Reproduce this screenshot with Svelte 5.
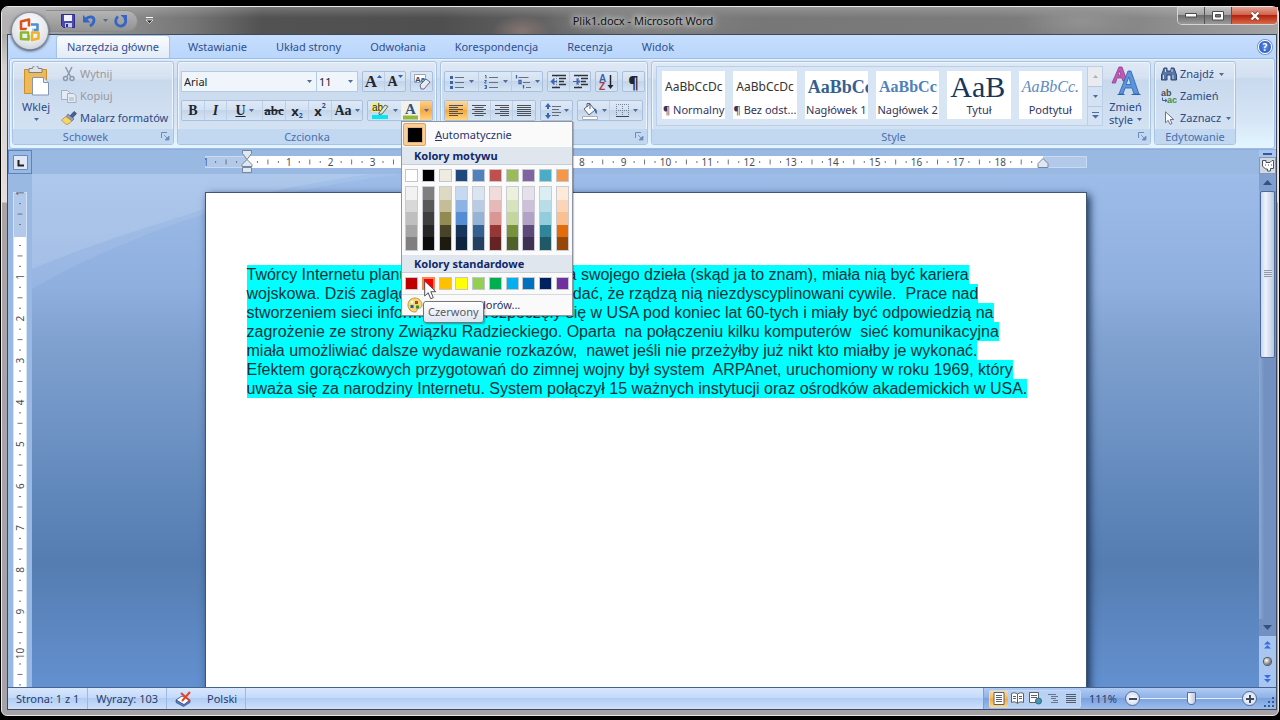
<script>
  const tabs = ['Narzędzia główne', 'Wstawianie', 'Układ strony', 'Odwołania', 'Korespondencja', 'Recenzja', 'Widok'];

  const styles = [
    { sample: 'AaBbCcDc', name: '¶ Normalny', kind: 'plain' },
    { sample: 'AaBbCcDc', name: '¶ Bez odst...', kind: 'plain' },
    { sample: 'AaBbCc', name: 'Nagłówek 1', kind: 'h1' },
    { sample: 'AaBbCc', name: 'Nagłówek 2', kind: 'h2' },
    { sample: 'AaB', name: 'Tytuł', kind: 'title' },
    { sample: 'AaBbCc.', name: 'Podtytuł', kind: 'subtitle' }
  ];

  const theme = [
    ['#ffffff', '#f2f2f2', '#d8d8d8', '#bfbfbf', '#a5a5a5', '#7f7f7f'],
    ['#000000', '#7f7f7f', '#595959', '#3f3f3f', '#262626', '#0c0c0c'],
    ['#eeece1', '#ddd9c3', '#c4bd97', '#938953', '#494429', '#1d1b10'],
    ['#1f497d', '#c6d9f0', '#8db3e2', '#548dd4', '#17365d', '#0f243e'],
    ['#4f81bd', '#dbe5f1', '#b8cce4', '#95b3d7', '#366092', '#244061'],
    ['#c0504d', '#f2dcdb', '#e5b9b7', '#d99694', '#953734', '#632423'],
    ['#9bbb59', '#ebf1dd', '#d7e3bc', '#c3d69b', '#76923c', '#4f6128'],
    ['#8064a2', '#e5e0ec', '#ccc1d9', '#b2a2c7', '#5f497a', '#3f3151'],
    ['#4bacc6', '#dbeef3', '#b7dde8', '#92cddc', '#31859b', '#205867'],
    ['#f79646', '#fdeada', '#fbd5b5', '#fac08f', '#e36c09', '#974806']
  ];
  const standard = ['#c00000', '#ff0000', '#ffc000', '#ffff00', '#92d050', '#00b050', '#00b0f0', '#0070c0', '#002060', '#7030a0'];
  let picked = $state('#ff0000');

  const lines = [
    'Twórcy Internetu planując zasady użytkowania swojego dzieła (skąd ja to znam), miała nią być kariera',
    'wojskowa. Dziś zaglądając do sieci zawsze widać, że rządzą nią niezdyscyplinowani cywile.  Prace nad',
    'stworzeniem sieci informatycznej rozpoczęły się w USA pod koniec lat 60-tych i miały być odpowiedzią na',
    'zagrożenie ze strony Związku Radzieckiego. Oparta  na połączeniu kilku komputerów  sieć komunikacyjna',
    'miała umożliwiać dalsze wydawanie rozkazów,  nawet jeśli nie przeżyłby już nikt kto miałby je wykonać.',
    'Efektem gorączkowych przygotowań do zimnej wojny był system  ARPAnet, uruchomiony w roku 1969, który',
    'uważa się za narodziny Internetu. System połączył 15 ważnych instytucji oraz ośrodków akademickich w USA.'
  ];

  const cm = 41.85;
  const hNumbers = Array.from({ length: 20 }, (_, i) => i - 1);
  const vNumbers = Array.from({ length: 12 }, (_, i) => i - 1);
</script>

{#snippet arrow()}
  <svg class="arrow" width="5" height="3" viewBox="0 0 5 3"><path d="M0 0h5L2.5 3z" fill="#4d6c99" /></svg>
{/snippet}

{#snippet launcher(label)}
  <button class="launcher" aria-label={label}>
    <svg width="9" height="9" viewBox="0 0 9 9"><path d="M.5 6V.5H6" fill="none" stroke="#6c8cb8" /><path d="M3 3l3.5 3.5M8 4v4H4z" fill="#6c8cb8" stroke="#6c8cb8" stroke-width=".8" /></svg>
  </button>
{/snippet}

{#snippet textLines(kind)}
  <svg width="16" height="14" viewBox="0 0 16 14">
    {#each [1.5, 3.5, 5.5, 7.5, 9.5, 11.5] as y, i}
      {@const w = i % 2 && kind !== 'full' ? 9 : 14}
      <path d="M{kind === 'left' || kind === 'full' ? 1 : kind === 'right' ? 15 - w : 8 - w / 2} {y}h{w}" stroke="#4b5058" />
    {/each}
  </svg>
{/snippet}

{#snippet listIcon(kind)}
  <svg width="17" height="16" viewBox="0 0 17 16">
    {#if kind === 'bullets'}
      <path d="M1 2h3v3H1zM1 7h3v3H1zM1 12h3v3H1z" fill="#3c62a8" />
      <path d="M6 3.5h9M6 8.5h9M6 13.5h9" stroke="#68727f" />
    {:else if kind === 'numbers'}
      <path d="M2 1.5h1v3M1.5 6.5h2L1.5 9h2M1.5 11.5h2v3h-2M2 13h1.5" fill="none" stroke="#3c62a8" />
      <path d="M6 3.5h9M6 8.5h9M6 13.5h9" stroke="#68727f" />
    {:else}
      <path d="M1.5 1v3.5M4 6.5h2v3H4zM8.5 11v3.5" fill="none" stroke="#3c62a8" stroke-width="1.3" />
      <path d="M3.5 3.5h10M8 8.5h7M11 13.5h5" stroke="#68727f" />
    {/if}
  </svg>
{/snippet}

{#snippet indentIcon(out)}
  <svg width="17" height="16" viewBox="0 0 17 16">
    <path d="M2 1.5h14M9 4.5h7M9 7.5h5M9 10.5h7M2 13.5h8" stroke="#30343a" stroke-width="1.5" />
    <path d={out ? 'M7 7.5H3M1 7.5l3-3v6z' : 'M1 7.5h4M8 7.5l-3-3v6z'} fill="#3865b8" stroke="#3865b8" />
    <path d="M6.5 2v12" stroke="#7f8a99" stroke-dasharray="1 1" />
  </svg>
{/snippet}

<div class="screen">
  <div class="window">
    <header class="titlebar">
      <div class="qat">
        <button aria-label="Zapisz">
          <svg width="16" height="16" viewBox="0 0 16 16"><path d="M1.5 1.5h13v13h-11l-2-2z" fill="#4a49b4" stroke="#2d2f86" /><path d="M4 2h8v6H4z" fill="#eef3ff" /><path d="M5 10h7v4.5H5z" fill="#c6cbe6" /><path d="M6 11h2v3H6z" fill="#30317e" /></svg>
        </button>
        <button class="undo" aria-label="Cofnij">
          <svg width="15" height="14" viewBox="0 0 15 14"><path d="M4 5c3-3.500 8-2.500 8 1 0 2.500-1.500 4.500-4 6" fill="none" stroke="#3566c4" stroke-width="2.800" /><path d="M1 1v7.500h7.500z" fill="#3566c4" /></svg>
          {@render arrow()}
        </button>
        <button aria-label="Powtórz">
          <svg width="14" height="14" viewBox="0 0 14 14"><path d="M4 2.5C1 5 1 9 3.5 11s7 1 8-2.500c.5-2 0-3.500-1-4.500" fill="none" stroke="#3566c4" stroke-width="2.800" /><path d="M6.500 1H13v6.500z" fill="#3566c4" /></svg>
        </button>
      </div>
      <button class="qatmore" aria-label="Dostosuj pasek narzędzi Szybki dostęp">
        <svg width="7" height="7" viewBox="0 0 7 7"><path d="M0 .5h7" stroke="#fff" /><path d="M0 3h7L3.5 6.5z" fill="#26303d" stroke="#fff" stroke-width=".7" /></svg>
      </button>
      <h1>Plik1.docx - Microsoft Word</h1>
      <div class="winbtns">
        <button aria-label="Minimalizuj"><svg width="12" height="5" viewBox="0 0 12 5"><path d="M.5.5h11v3.5H.5z" fill="#fff" stroke="#4c4c4c" /></svg></button>
        <button aria-label="Maksymalizuj"><svg width="12" height="10" viewBox="0 0 12 10"><path d="M.5.5h11v8.5H.5z" fill="#fff" stroke="#4c4c4c" /><path d="M3.5 3.5h5v2.5h-5z" fill="#777" stroke="#4c4c4c" /></svg></button>
        <button class="close" aria-label="Zamknij"><svg width="12" height="10" viewBox="0 0 12 10"><path d="M2.5 1.5l7 7M9.5 1.5l-7 7" stroke="#6a3434" stroke-width="3.600" /><path d="M2.5 1.5l7 7M9.5 1.5l-7 7" stroke="#fff" stroke-width="2.400" /></svg></button>
      </div>
    </header>

    <button class="office" aria-label="Przycisk pakietu Office">
      <svg width="24" height="26" viewBox="0 0 24 26" fill="none" stroke-width="2.600" stroke-linejoin="round">
        <path d="M9 11H3V3.5l8-2v7" stroke="#d9531e" />
        <path d="M13 6.5h6.5V12H14" stroke="#4a90d4" />
        <path d="M3 14.5h7.5v7L3 21z" stroke="#8bb92c" />
        <path d="M14 14.5h6.5v6L14 22z" stroke="#eeb326" />
        <path d="M8 12h8M12 9v8" stroke="#fff" stroke-width="1" />
      </svg>
    </button>

    <div class="client">
      <nav class="tabs">
        {#each tabs as tab, i}
          <button class="tab" class:active={i === 0}>{tab}</button>
        {/each}
        <button class="help" aria-label="Pomoc">?</button>
      </nav>

      <div class="ribbon">
        <section class="group clipboard">
          <div class="body">
            <button class="big">
              <svg width="27" height="30" viewBox="0 0 27 30">
                <path d="M1.5 3.5h22v24h-22z" fill="#efb955" stroke="#c98e2f" />
                <path d="M6 2.5h3.5a3 3 0 0 1 6 0H19v4H6z" fill="#dfe2e6" stroke="#7b828c" />
                <path d="M9.5 11.5h11l5 5v12.5h-16z" fill="#fff" stroke="#8494b4" /><path d="M20.5 11.5v5h5" fill="#dbe5f5" stroke="#8494b4" />
              </svg>
              <span>Wklej</span>
              {@render arrow()}
            </button>
            <div class="stack">
              <button class="row" disabled>
                <svg width="16" height="16" viewBox="0 0 16 16" fill="none" stroke="#8d99ab" stroke-width="1.500"><path d="M4.5 1l5 9.5M11 1L6 10.5" /><circle cx="4.5" cy="12.5" r="2" /><circle cx="11" cy="12.5" r="2" /></svg>
                Wytnij
              </button>
              <button class="row" disabled>
                <svg width="16" height="14" viewBox="0 0 16 14" fill="#e4ebf5" stroke="#a3b0c4"><path d="M.5 1.5h6l2 2v7h-8z" /><path d="M6.5 4.5h6l2.5 2v7H6.5z" /><path d="M8 9h5M8 11h5" /></svg>
                Kopiuj
              </button>
              <button class="row">
                <svg width="16" height="14" viewBox="0 0 16 14"><path d="M9 5l4-4.5 2.5 2L11.5 7z" fill="#4a5f93" stroke="#2c3c66" stroke-width=".7" /><path d="M7 3l6 5-2 2-6-4z" fill="#93a1bd" stroke="#47557a" stroke-width=".6" /><path d="M5 5.5l6 4.5c-2 2-4 3.500-6 3.500L.5 9z" fill="#f4d56f" stroke="#a98222" stroke-width=".7" /></svg>
                Malarz formatów
              </button>
            </div>
          </div>
          <footer><span>Schowek</span>{@render launcher('Schowek')}</footer>
        </section>

        <section class="group font">
          <div class="body rows">
            <div class="line">
              <div class="combos">
                <label class="combo family"><select aria-label="Czcionka"><option>Arial</option></select>{@render arrow()}</label>
                <label class="combo size"><select aria-label="Rozmiar czcionki"><option>11</option></select>{@render arrow()}</label>
              </div>
              <div class="cluster">
                <button class="w21 serif" aria-label="Powiększ czcionkę"><b class="grow">A</b><svg class="caret" width="5" height="3" viewBox="0 0 5 3"><path d="M0 3h5L2.5 0z" fill="#365fa8" /></svg></button>
                <button class="w21 serif" aria-label="Zmniejsz czcionkę"><b class="shrink">A</b><svg class="caret" width="5" height="3" viewBox="0 0 5 3"><path d="M0 0h5L2.5 3z" fill="#365fa8" /></svg></button>
              </div>
              <div class="cluster">
                <button class="w21" aria-label="Wyczyść formatowanie">
                  <svg width="18" height="18" viewBox="0 0 18 18"><path d="M1.5 1.5h11v8h-11z" fill="#fff" stroke="#9aa5ba" /><text x="2" y="8.500" font-size="8" font-weight="bold" fill="#364563">Aa</text><path d="M7 12l6-6 4 3-6 7H8z" fill="#e9eaf2" stroke="#626c88" /></svg>
                </button>
              </div>
            </div>
            <div class="line">
              <div class="cluster">
                <button class="w22 serif"><b>B</b></button>
                <button class="w22 serif"><i>I</i></button>
                <button class="w36 serif"><b><u>U</u></b>{@render arrow()}</button>
                <button class="w23 serif small"><b><s>abc</s></b></button>
                <button class="w23 sub"><b>x</b><sub>2</sub></button>
                <button class="w23 sup"><b>x</b><sup>2</sup></button>
                <button class="w31 serif"><b class="case">Aa</b>{@render arrow()}</button>
              </div>
              <div class="cluster">
                <button class="w33" aria-label="Kolor wyróżnienia tekstu">
                  <svg width="19" height="18" viewBox="0 0 19 18"><path d="M1 13h16v4H1z" fill="#00e8f4" /><path d="M1 1h9v9H1z" fill="#f4ee72" /><text x="1" y="9" font-size="10" fill="#222b38">ab</text><path d="M8 11l6-8 3 1.5-6 7.5-3 .5z" fill="#dfe8d2" stroke="#5b6c55" /></svg>
                  {@render arrow()}
                </button>
                <div class="colorsplit">
                  <button class="face" aria-label="Kolor czcionki">
                    <svg width="17" height="18" viewBox="0 0 17 18"><path d="M1 13.5h15v4H1z" fill="#92b83c" /><text class="letter" x="3" y="12" font-size="15" font-weight="bold">A</text></svg>
                  </button>
                  <button class="drop" aria-label="Kolor czcionki, menu">{@render arrow()}</button>

                  <div class="menu">
                    <button class="auto"><span class="autobox"><span></span></span><span><u>A</u>utomatycznie</span></button>
                    <h2>Kolory motywu</h2>
                    <div class="grid top">
                      {#each theme as column}
                        <button class="sw" aria-label={column[0]} style="background: {column[0]}" onclick={() => (picked = column[0])}></button>
                      {/each}
                    </div>
                    <div class="grid tints">
                      {#each theme as column}
                        <div class="column">
                          {#each column.slice(1) as tint}
                            <button aria-label={tint} style="background: {tint}" onclick={() => (picked = tint)}></button>
                          {/each}
                        </div>
                      {/each}
                    </div>
                    <h2>Kolory standardowe</h2>
                    <div class="grid std">
                      {#each standard as color}
                        <button class="sw" class:hot={color === picked} aria-label={color} style="background: {color}" onclick={() => (picked = color)}></button>
                      {/each}
                    </div>
                    <button class="more">
                      <svg width="16" height="16" viewBox="0 0 16 16"><path d="M8 1C4 1 1 4 1 8s3 7 7 7c2 0 1.5-2 2.5-3s4.5-.5 4.5-4-3-7-7-7z" fill="#f3d877" stroke="#c09a3c" /><circle cx="5" cy="5" r="1.500" fill="#fff" /><path d="M8 4h3v3H8z" fill="#b43d28" /><path d="M3.5 8h3v3h-3z" fill="#2d56a5" /><path d="M9 8.5h3v3H9z" fill="#3f8d35" /></svg>
                      <span>Więcej kolorów...</span>
                    </button>
                    <div class="tooltip">Czerwony</div>
                    <svg class="cursor" width="13" height="20" viewBox="0 0 13 20"><path d="M.7 1v15l3.5-3.300 2.500 6 2.600-1-2.500-6h5z" fill="#fff" stroke="#4f4f57" /></svg>
                  </div>
                </div>
              </div>
            </div>
          </div>
          <footer><span>Czcionka</span></footer>
        </section>

        <section class="group para">
          <div class="body rows">
            <div class="line">
              <div class="cluster">
                <button class="w33" aria-label="Punktory">{@render listIcon('bullets')}{@render arrow()}</button>
                <button class="w33" aria-label="Numerowanie">{@render listIcon('numbers')}{@render arrow()}</button>
                <button class="w31" aria-label="Lista wielopoziomowa">{@render listIcon('multi')}{@render arrow()}</button>
              </div>
              <div class="cluster">
                <button class="w21" aria-label="Zmniejsz wcięcie">{@render indentIcon(true)}</button>
                <button class="w21" aria-label="Zwiększ wcięcie">{@render indentIcon(false)}</button>
              </div>
              <div class="cluster">
                <button class="w21" aria-label="Sortuj">
                  <svg width="17" height="18" viewBox="0 0 17 18"><text x="1" y="8.500" font-size="10" font-weight="bold" fill="#3b62ac">A</text><text x="1" y="17" font-size="10" font-weight="bold" fill="#a93a44">Z</text><path d="M12.5 2v11" stroke="#22262c" stroke-width="1.500" /><path d="M9.5 12h6l-3 4z" fill="#22262c" /></svg>
                </button>
              </div>
              <div class="cluster"><button class="w21 pilcrow">¶</button></div>
            </div>
            <div class="line">
              <div class="cluster">
                <button class="w22 on" aria-label="Wyrównaj do lewej">{@render textLines('left')}</button>
                <button class="w23" aria-label="Wyśrodkuj">{@render textLines('center')}</button>
                <button class="w22" aria-label="Wyrównaj do prawej">{@render textLines('right')}</button>
                <button class="w23" aria-label="Wyjustuj">{@render textLines('full')}</button>
              </div>
              <div class="cluster">
                <button class="w31" aria-label="Interlinia">
                  <svg width="16" height="16" viewBox="0 0 16 16"><path d="M3 0l3 4H0zM3 16l3-4H0z" fill="#3865b8" /><path d="M3 3v3M3 10v3" stroke="#3865b8" stroke-width="2" /><path d="M7 3.5h9M7 6.5h7M7 9.5h9M7 12.5h7" stroke="#626b77" /></svg>
                  {@render arrow()}
                </button>
              </div>
              <div class="cluster">
                <button class="w31" aria-label="Cieniowanie">
                  <svg width="18" height="18" viewBox="0 0 18 18"><path d="M3 7l6-5 5 6-6 5z" fill="#f7f9fc" stroke="#5a6477" /><path d="M6 5V1.5h3V7" fill="none" stroke="#5a6477" /><path d="M13 6c3 1 3.500 4 2.500 6-2-1-1-3-2.500-6z" fill="#3563b7" /><path d="M1.5 14.5h15v3h-15z" fill="#fff" stroke="#a5b0bf" /></svg>
                  {@render arrow()}
                </button>
                <button class="w33" aria-label="Obramowania">
                  <svg width="15" height="15" viewBox="0 0 15 15" fill="none"><path d="M1.5 14V1.5h12V14M7.5 1v12M1 7.5h13" stroke="#748096" stroke-dasharray="1 1" /><path d="M1 13.5h13" stroke="#3c4554" /></svg>
                  {@render arrow()}
                </button>
              </div>
            </div>
          </div>
          <footer><span></span>{@render launcher('Akapit')}</footer>
        </section>

        <section class="group styles">
          <div class="body">
            <div class="gallery">
              <div class="items">
                {#each styles as style}
                  <button class="style"><span class="sample {style.kind}">{style.sample}</span><span class="name">{style.name}</span></button>
                {/each}
              </div>
              <div class="gscroll">
                <button class="off" aria-label="W górę"><svg width="5" height="3" viewBox="0 0 5 3"><path d="M0 3h5L2.5 0z" fill="#a9b2be" /></svg></button>
                <button aria-label="W dół">{@render arrow()}</button>
                <button aria-label="Więcej"><svg width="7" height="7" viewBox="0 0 7 7"><path d="M0 .5h7" stroke="#4d6c99" /><path d="M0 3h7L3.5 6.5z" fill="#4d6c99" /></svg></button>
              </div>
            </div>
            <button class="big change">
              <svg width="30" height="30" viewBox="0 0 30 30"><path d="M1 17L8 1h3l5 14h-4l-1-3H6l-1.500 5zM7 9h3L8.700 5z" fill="#c05ab5" stroke="#8f3a8b" stroke-width=".8" /><path d="M8 28L17 5h3l8 23h-5l-2-6h-7l-2 6zM15 18.5h5L17.800 11z" fill="#5b94dc" stroke="#2f62ad" stroke-width=".8" /><path d="M6.5 28.5h7M20.5 28.5h9" stroke="#2f62ad" /></svg>
              <span>Zmień</span>
              <span>style {@render arrow()}</span>
            </button>
          </div>
          <footer><span>Style</span>{@render launcher('Style')}</footer>
        </section>

        <section class="group edit">
          <div class="body">
            <div class="stack">
              <button class="row">
                <svg width="16" height="14" viewBox="0 0 16 14"><path d="M3 1h3v3h4V1h3l2.5 7v5H10V8H6v5H.5V8z" fill="#5876a8" stroke="#2f4570" /><path d="M2.5 8v4M12 8v4M4.5 2v3M11 2v3" stroke="#cddaf0" /></svg>
                Znajdź {@render arrow()}
              </button>
              <button class="row">
                <svg width="16" height="16" viewBox="0 0 16 16"><text x="0" y="8" font-size="9" font-weight="bold" fill="#4a4e56">ab</text><text x="6" y="15" font-size="9" font-weight="bold" fill="#3c9141">ac</text><path d="M1.5 9.5v3h4M4 11l2 1.5L4 14" fill="none" stroke="#3a5fae" /></svg>
                Zamień
              </button>
              <button class="row">
                <svg width="16" height="14" viewBox="0 0 16 14"><path d="M4.5.8v11l2.700-2.500 1.800 4 2-.8-1.800-4h3.500z" fill="#fff" stroke="#6a7690" /></svg>
                Zaznacz {@render arrow()}
              </button>
            </div>
          </div>
          <footer><span>Edytowanie</span></footer>
        </section>
      </div>

      <div class="workspace">
        <button class="tabstop" aria-label="Tabulator">
          <svg width="15" height="15" viewBox="0 0 15 15"><path d="M.5.5h14v14H.5z" fill="#dfe8f6" stroke="#6f87b2" /><path d="M5.500 5v5.500H11" fill="none" stroke="#222" stroke-width="2" /></svg>
        </button>
        <div class="hruler">
          <svg width="882" height="24" viewBox="0 0 882 24">
            <path d="M.5 6.5h881v11H.5z" fill="#b3c9ea" stroke="#c9dbf4" />
            <path d="M42 6h796v12H42z" fill="#fff" />
            {#each hNumbers as n}
              {@const x = 42 + n * cm}
              {#if n !== 0 && n < 19}<text x={n < 0 ? -2 : x} y="16" class:first={n < 0}>{Math.abs(n)}</text>{/if}
              {#if n < 20 && x + cm * 0.75 < 882}
                <path d="M{x + cm * 0.25} 11v2M{x + cm * 0.5} 9.5v5M{x + cm * 0.75} 11v2" stroke="#6d7380" />
              {/if}
            {/each}
            <path d="M37.5.5h9v3L42 9.5l5 5v2h-10v-2l5-5-4.500-6zM37.5 17.5h9v5h-9z" fill="#dfe7f1" stroke="#76869f" />
            <path d="M838 8.5l5 5v4h-10v-4z" fill="#dfe7f1" stroke="#76869f" />
          </svg>
        </div>
        <div class="vruler">
          <svg width="14" height="497" viewBox="0 0 14 497">
            <path d="M.5.5h13v497H.5z" fill="#b3c9ea" stroke="#d5e3f7" />
            <path d="M1 45h12v460H1z" fill="#fff" />
            {#each vNumbers as n}
              {@const y = 43 + n * cm}
              {#if n !== 0}<text transform="translate(11 {y}) rotate(-90)">{Math.abs(n)}</text>{/if}
              <path d="M6 {y + cm * 0.25}h2M4.5 {y + cm * 0.5}h5M6 {y + cm * 0.75}h2" stroke="#6d7380" />
            {/each}
          </svg>
        </div>
        <main class="canvas">
          <svg class="swoosh" width="520" height="140" viewBox="0 0 520 140">
            <path d="M0 0h340C280 8 215 22 173 35S60 70 0 95z" fill="#fff" opacity=".18" />
            <path d="M0 95C60 70 130 48 173 35S280 8 340 0h30C290 10 215 27 173 40S60 80 0 115z" fill="#fff" opacity=".08" />
          </svg>
          <article class="page">
            <p>{#each lines as line, i}<mark>{line}</mark>{#if i < lines.length - 1}<br />{/if}{/each}</p>
          </article>
        </main>
        <div class="scroll">
          <span class="split"></span>
          <button class="toggle" aria-label="Linijka"><svg width="14" height="13" viewBox="0 0 14 13"><path d="M1.5 4V1.5H5v2h4L11 1.5h1.5v8h-3v2.5H6.5V10h-2L1.5 7z" fill="#fff" stroke="#4b5362" /><path d="M4 6h1M7 6h1M10 6h1" stroke="#4b5362" /></svg></button>
          <button class="up" aria-label="Przewiń w górę"><svg width="9" height="5" viewBox="0 0 9 5"><path d="M0 5h9L4.5 0z" fill="#36507f" /></svg></button>
          <div class="track"><div class="thumb"><span></span></div></div>
          <button class="down" aria-label="Przewiń w dół"><svg width="9" height="5" viewBox="0 0 9 5"><path d="M0 0h9L4.5 5z" fill="#36507f" /></svg></button>
          <div class="browse">
            <button aria-label="Poprzednia strona"><svg width="7" height="8" viewBox="0 0 7 8"><path d="M0 3.5h7L3.5 0zM0 7.5h7L3.5 4z" fill="#3b6be0" /></svg></button>
            <button aria-label="Wybierz obiekt przeglądania"><span class="ball"></span></button>
            <button aria-label="Następna strona"><svg width="7" height="8" viewBox="0 0 7 8"><path d="M0 0h7L3.5 3.5zM0 4h7L3.5 7.5z" fill="#3b6be0" /></svg></button>
          </div>
        </div>
      </div>

      <footer class="status">
        <button>Strona: 1 z 1</button>
        <button>Wyrazy: 103</button>
        <button class="lang">
          <svg width="17" height="16" viewBox="0 0 17 16"><path d="M1 9l6-4 8 4-6 5z" fill="#fff" stroke="#4a6299" /><path d="M1 9v2.5L8.5 15.5 15 11.5V9l-6 4.5z" fill="#5d7dc0" stroke="#33508d" stroke-width=".7" /><path d="M6 2l9 8M15 1L7 10" stroke="#e0452c" stroke-width="2" /></svg>
          Polski
        </button>
        <div class="view">
          <div class="views">
            <button class="on" aria-label="Układ wydruku"><svg width="12" height="13" viewBox="0 0 12 13"><path d="M1 .5h10v12H1z" fill="#fff" stroke="#59616e" /><path d="M3 3.5h6M3 5.5h6M3 7.5h6M3 9.5h6" stroke="#59616e" /></svg></button>
            <button aria-label="Czytanie"><svg width="13" height="13" viewBox="0 0 13 13"><path d="M.5 1.5c2-1 4-1 6 .5 2-1.500 4-1.500 6-.5v9c-2-1-4-1-6 1-2-2-4-2-6-1z" fill="#fff" stroke="#59616e" /><path d="M6.5 2v9M2 4.5h3M2 6.5h3M8 4.5h3M8 6.5h3" stroke="#59616e" /></svg></button>
            <button aria-label="Układ sieci Web"><svg width="13" height="13" viewBox="0 0 13 13"><path d="M.5.5h9v10h-9z" fill="#fff" stroke="#59616e" /><path d="M2 3.5h6M2 5.5h6" stroke="#59616e" /><circle cx="9.500" cy="9" r="3" fill="#4c96ab" stroke="#2b6b80" /></svg></button>
            <button aria-label="Konspekt"><svg width="12" height="11" viewBox="0 0 12 11"><path d="M1 1.5h8M4 3.5h7M4 5.5h5M6 7.5h5M4 9.5h7" stroke="#677489" /></svg></button>
            <button aria-label="Wersja robocza"><svg width="12" height="11" viewBox="0 0 12 11"><path d="M1 1.5h10M1 3.5h10M1 5.5h10M1 7.5h10M1 9.5h10" stroke="#4f5a6b" /></svg></button>
          </div>
          <button class="pct">111%</button>
          <button class="round" aria-label="Pomniejsz"><svg width="8" height="8" viewBox="0 0 8 8"><path d="M0 4h8" stroke="#3d4a63" stroke-width="2" /></svg></button>
          <input type="range" min="10" max="190" value="100" aria-label="Powiększenie" />
          <button class="round" aria-label="Powiększ"><svg width="8" height="8" viewBox="0 0 8 8"><path d="M0 4h8M4 0v8" stroke="#3d4a63" stroke-width="2" /></svg></button>
          <svg class="grip" width="12" height="12" viewBox="0 0 12 12"><path d="M9 1h2v2H9zM5 5h2v2H5zM9 5h2v2H9zM1 9h2v2H1zM5 9h2v2H5zM9 9h2v2H9z" fill="#35599b" /></svg>
        </div>
      </footer>
    </div>
  </div>
</div>

<style>
  :global(body) { background: #000; }
  .screen {
    display: flex;
    height: 100vh;
    box-sizing: border-box;
    padding: 6px 1px 4px;
    background: #000;
    overflow: hidden;
    font: 11px/16px "Noto Sans", "Open Sans", sans-serif;
    color: #2b4a86;
  }
  button, select { font: inherit; color: inherit; margin: 0; padding: 0; border: 0; background: none; }
  button { display: flex; align-items: center; justify-content: center; white-space: nowrap; }
  svg { flex: none; display: block; }
  svg text { font-family: "Liberation Sans", sans-serif; }

  .window {
    position: relative;
    flex: 1;
    display: flex;
    flex-direction: column;
    box-sizing: border-box;
    min-width: 0;
    border: 1px solid #e8e8e8;
    border-radius: 7px 7px 6px 6px;
    padding: 0 1px 5px 5px;
    background: linear-gradient(#8d8a89 0, #d5d0ce 60px, #e4dedc 195px, #aaa4a5 196px, #a5a3a8);
  }
  .titlebar {
    display: flex;
    align-items: center;
    height: 27px;
    margin: 0 -1px 0 -5px;
    border-radius: 6px 6px 0 0;
    background:
      radial-gradient(ellipse 30px 16px at 520px 24px, #857571, transparent),
      radial-gradient(ellipse 110px 30px at 650px 14px, #8a8a8a, transparent),
      radial-gradient(ellipse 60px 20px at 1080px 14px, #929292, transparent),
      linear-gradient(#fff3, transparent 40%),
      linear-gradient(90deg, #b5b3b3, #989898 80px, #757575 190px, #525252 260px, #4f4f4f 440px, #666 560px, #777 760px, #7b7b7b 1000px, #868686 1130px, #a3a3a3);
  }
  .qat {
    display: flex;
    align-items: center;
    gap: 6px;
    box-sizing: border-box;
    height: 22px;
    margin-left: 44px;
    padding: 0 9px 0 14px;
    border: 1px solid #8c8c8c;
    border-left: 0;
    border-radius: 0 11px 11px 0;
    background: linear-gradient(#b4b4b4, #929292);
  }
  .qat .undo { gap: 6px; }
  .qatmore { margin-left: 8px; }
  h1 {
    flex: 1;
    margin: 0 44px 0 0;
    text-align: center;
    font-weight: 400;
    font-size: 11px;
    color: #111;
    text-shadow: 0 0 5px #ddd, 0 0 8px #ccc, 0 0 10px #bbb;
  }
  .winbtns { display: flex; align-self: flex-start; border: 1px solid #d5d5d5; border-top: 0; border-radius: 0 0 5px 5px; overflow: hidden; }
  .winbtns button { width: 27px; height: 17px; background: linear-gradient(#c4c4c4, #a1a1a1 48%, #6d6d6d 50%, #9a9a9a); border-right: 1px solid #555; }
  .winbtns .close { width: 45px; border: 0; background: linear-gradient(#e3a393, #cf5e49 48%, #b1250d 50%, #d9694d); }

  .office {
    position: absolute;
    left: 10px;
    top: 6px;
    z-index: 3;
    width: 36px;
    height: 36px;
    border-radius: 50%;
    background: radial-gradient(circle at 50% 35%, #fff, #e4e6ea 60%, #bcc1ca);
    box-shadow: 0 0 0 1px #8b95a5, 0 1px 3px 1px #445;
  }

  .client { flex: 1; display: flex; flex-direction: column; min-height: 0; border: 1px solid #404a5a; background: #bfdbff; }
  .tabs { display: flex; align-items: flex-end; gap: 9px; height: 23px; padding: 0 4px 0 49px; background: linear-gradient(#c6defe, #b9d6fb); }
  .tab { height: 22px; padding: 0 10px; color: #2f4f90; }
  .tab.active { border-radius: 3px 3px 0 0; background: linear-gradient(#fafcfe, #e2ebf7); box-shadow: 0 0 1px 1px #a5c0e4; clip-path: inset(-2px -2px 0); }
  .help { align-self: center; margin-left: auto; width: 14px; height: 14px; border-radius: 50%; border: 1px solid #fff; background: radial-gradient(#5b92ee, #1f49b0); box-shadow: 0 0 0 1px #7b95c8; color: #fff; font-weight: 700; font-size: 10px; }

  .ribbon {
    display: flex;
    gap: 3px;
    margin: 0 1px;
    padding: 2px 38px 3px 2px;
    border: 1px solid #9dbce5;
    border-radius: 3px;
    background: linear-gradient(#dce7f5, #d3e0f1 20%, #c8d9ee 22%, #d7e6f6 70%, #e3f6ff);
    box-shadow: inset 0 0 0 1px #e8f2fd;
    z-index: 2;
  }
  .group { display: flex; flex-direction: column; box-sizing: border-box; height: 84px; border: 1px solid #a9c3e3; border-radius: 3px; background: linear-gradient(#e0e9f5, #d5e1f1 20%, #c9d9ed 22%, #d6e4f4); box-shadow: inset 0 0 0 1px #eef4fb; }
  .body { flex: 1; display: flex; }
  .group > footer { display: flex; align-items: center; height: 15px; background: #c1d8f0; color: #4a6faf; border-radius: 0 0 2px 2px; }
  .group > footer span { flex: 1; text-align: center; }
  .launcher { width: 15px; height: 14px; }
  .clipboard { width: 162px; }
  .font { width: 260px; }
  .para { width: 208px; }
  .styles { flex: 1; min-width: 0; }
  .edit { width: 82px; }
  .big { flex-direction: column; justify-content: flex-start; padding-top: 4px; width: 46px; line-height: 13px; }
  .big > span { display: flex; align-items: center; gap: 4px; }
  .big > svg:first-child { margin-bottom: 4px; }
  .big > .arrow { margin-top: 5px; }
  .stack { display: flex; flex-direction: column; padding-top: 1px; }
  .row { justify-content: flex-start; gap: 3px; height: 22px; padding: 0 2px; }
  .row .arrow { margin-left: 2px; }
  .row:disabled { color: #96999f; }

  .rows { flex-direction: column; gap: 8px; padding: 9px 3px 0; }
  .line { display: flex; gap: 4px; }
  .cluster { display: flex; border: 1px solid #a8c0e0; border-radius: 2px; background: linear-gradient(#dfe9f6, #d4e1f2 45%, #c4d5ea 50%, #d5e4f4); }
  .cluster button { height: 19px; box-sizing: border-box; gap: 3px; }
  .cluster > button + button { border-left: 1px solid #bccfe7; }
  .w21 { width: 21px; } .w22 { width: 22px; } .w23 { width: 23px; } .w31 { width: 31px; } .w33 { width: 33px; } .w36 { width: 36px; }
  .combos { display: flex; }
  .combo { position: relative; display: flex; box-sizing: border-box; height: 21px; border: 1px solid #b3cae9; background: #f0f5fc; }
  .combo.family { width: 136px; }
  .combo.size { width: 41px; border-left: 0; }
  .combo select { appearance: none; width: 100%; padding-left: 2px; color: #222; outline: 0; }
  .combo .arrow { position: absolute; right: 4px; top: 8px; pointer-events: none; }
  .serif { font: 14px/18px "Liberation Serif", serif; color: #22262e; }
  .serif.small { font-size: 13px; }
  .cluster .serif i { font-weight: 700; }
  .grow { font-size: 17px; }
  .shrink { font-size: 14px; }
  .cluster .w21.serif { gap: 0; }
  .caret { align-self: flex-start; margin-top: 3px; }
  .case { font-size: 14px; }
  .letter { font-family: "Liberation Serif", serif; fill: #33517f; }
  .sub, .sup { color: #22262e; }
  .cluster .sub, .cluster .sup { gap: 0; }
  .sub b, .sup b { font-size: 13px; }
  sub, sup { font-size: 7px; line-height: 8px; color: #2d4d8c; font-weight: 700; }
  sub { align-self: flex-end; }
  sup { align-self: flex-start; margin-top: 1px; }
  .pilcrow { font-size: 16px; color: #22262e; font-weight: 700; }
  .on { background: linear-gradient(#fbd9a2, #f9b95a 45%, #f6a637 50%, #fdd787); }

  .colorsplit { position: relative; display: flex; }
  .face { width: 19px; background: #f3f2ea; }
  .drop { width: 12px; background: linear-gradient(#fbd08d, #f7a943 50%, #fcd283); }
  .menu {
    position: absolute;
    left: 0;
    top: 20px;
    z-index: 5;
    box-sizing: border-box;
    width: 172px;
    border: 1px solid #8f96a0;
    background: #fafafa;
    color: #29346b;
    box-shadow: 1px 1px 1px #0003;
  }
  .menu h2 { margin: 0; height: 17px; padding-left: 12px; font-size: 11px; line-height: 17px; font-weight: 700; color: #12286b; background: #dfe6ee; border-bottom: 1px solid #c5cdd8; }
  .cluster .menu .auto { height: 25px; width: 100%; justify-content: flex-start; gap: 9px; }
  .autobox { box-sizing: border-box; display: grid; place-items: center; width: 23px; height: 23px; margin-left: 1px; border: 1px solid #dba45a; border-radius: 2px; background: #f7cf9c; }
  .autobox span { width: 14px; height: 14px; background: #000; box-shadow: 0 0 0 1px #e9b26c; }
  .grid { display: grid; grid-template-columns: repeat(10, 13px); justify-content: space-between; padding: 0 3px; }
  .top { padding-top: 4px; padding-bottom: 4px; }
  .tints { padding-bottom: 4px; }
  .cluster .menu .sw { width: 13px; height: 13px; border: 1px solid #c3c7cc; }
  .cluster .menu .hot { border: 2px solid #f08a52; }
  .column { border: 1px solid #c9ccd2; height: 65px; box-sizing: border-box; display: grid; grid-template-rows: repeat(5, 1fr); }
  .cluster .menu .column button { height: auto; width: 100%; }
  .std { padding-top: 4px; padding-bottom: 4px; border-bottom: 1px solid #d5d8dd; }
  .cluster .menu .more { height: 20px; width: 100%; justify-content: flex-start; gap: 11px; padding-left: 5px; }
  .more svg { width: 16px; }
  .tooltip { position: absolute; left: 21px; top: 179px; padding: 2px 4px; border: 1px solid #767676; border-radius: 3px; background: linear-gradient(#fff, #dfe4f0); color: #575b63; box-shadow: 1px 1px 2px #0005; }
  .cursor { position: absolute; left: 22px; top: 158px; }

  .styles .body { padding: 4px 3px 3px 4px; gap: 1px; }
  .gallery { flex: 1; display: flex; min-width: 0; border: 1px solid #b9cfea; background: #d8e5f5; }
  .items { flex: 1; display: grid; grid-template-columns: repeat(6, 1fr); gap: 8px; padding: 4px 5px; min-width: 0; }
  .style { min-width: 0; flex-direction: column; justify-content: flex-end; overflow: hidden; background: #fff; color: #33345c; height: 48px; }
  .sample { display: flex; align-items: center; width: 100%; height: 30px; box-sizing: border-box; padding: 2px 3px 0; overflow: hidden; color: #333; }
  .plain { font-size: 12px; color: #333; }
  .h1, .h2, .title, .subtitle { font-family: "Liberation Serif", serif; }
  .h1 { font-weight: 700; font-size: 18px; color: #365f91; }
  .h2 { font-weight: 700; font-size: 16px; color: #4f81bd; }
  .title { font-size: 30px; color: #17365d; }
  .subtitle { font-style: italic; font-size: 16px; color: #5e8bc0; }
  .name { line-height: 18px; }
  .gscroll { width: 14px; display: grid; grid-template-rows: repeat(3, 1fr); border-left: 1px solid #b9cfea; background: #d4e2f4; }
  .gscroll button + button { border-top: 1px solid #b3c9e6; }
  .gscroll .off { background: #e9ebee; }
  .styles .change { width: 43px; padding-top: 0; }
  .edit .stack { padding-left: 4px; }

  .workspace { flex: 1; min-height: 0; display: grid; grid-template: 24px minmax(0, 1fr) / 24px minmax(0, 1fr) 17px; background: #9ab9e2; border-top: 1px solid #8eafdc; }
  .tabstop { border: 1px solid #5a83c2; }
  .hruler { display: flex; justify-content: center; overflow: hidden; }
  .hruler text, .vruler text { font: 10px "Noto Sans", sans-serif; fill: #4a4f5a; text-anchor: middle; }
  .hruler .first { text-anchor: start; }
  .vruler { padding: 18px 0 0 5px; overflow: hidden; }
  .canvas { position: relative; display: flex; justify-content: center; overflow: hidden; padding-top: 18px; background: linear-gradient(#9dbce8, #8fafdf 22%, #7fa1d0 33%, #5b83b7 68%, #557db1 76%, #6390cf); }
  .swoosh { position: absolute; left: 0; top: 0; }
  .page { position: relative; box-sizing: border-box; width: 882px; height: 1200px; padding: 72px 41px; border: 1px solid #3f5675; background: #fff; box-shadow: 3px 3px 8px #1b3357; }
  .page p { margin: 0; font: 16px/19px "Liberation Sans", Arial, sans-serif; white-space: pre; color: #10323a; }
  mark { background: #00ffff; color: inherit; padding: 1px 0; }

  .scroll { grid-area: 1 / 3 / 3 / 4; display: flex; flex-direction: column; align-items: stretch; background: #a9c6f0; }
  .split { height: 2px; margin: 3px 4px 2px; background: #3a5890; }
  .toggle { height: 17px; border: 1px solid #8797b3; background: #d0d8e4; }
  .up { height: 17px; background: #7f9fcf; }
  .track { flex: 1; min-height: 0; padding: 0 1px; background: linear-gradient(90deg, #8daad4, #7391c0 30%, #7391c0); }
  .thumb { display: grid; place-items: center; box-sizing: border-box; height: 39%; border: 1px solid #4d6a9f; border-radius: 2px; background: linear-gradient(90deg, #c7d6ec, #edf2fa 35%, #b9c8df); }
  .thumb span { width: 8px; height: 8px; background: repeating-linear-gradient(#8f9bb0 0 1px, #dfe5ef 1px 2px); }
  .down { height: 17px; background: #7391c0; }
  .browse { height: 51px; display: grid; grid-template-rows: repeat(3, 1fr); }
  .ball { width: 7px; height: 7px; border-radius: 50%; background: radial-gradient(circle at 35% 35%, #fff, #333); box-shadow: 0 0 0 1px #555; }

  .status { display: flex; height: 21px; border-top: 1px solid #44648f; background: linear-gradient(#d9e7fb, #c4dafa 45%, #b1cdf5 50%, #cfe0fa); color: #273d6c; }
  .status > button { padding: 0 8px; border-right: 1px solid #9bb9e6; }
  .status .lang { gap: 15px; }
  .view { display: flex; align-items: center; margin-left: auto; padding-left: 5px; border-left: 1px solid #7d9fd2; background: linear-gradient(#b1cbf3, #8fb2e8 45%, #7ba2de 50%, #9dbdee); }
  .views { display: flex; border: 1px solid #c9dcf6; border-radius: 2px; background: #b9d1f2; }
  .views button { width: 18px; height: 16px; }
  .pct { width: 44px; }
  .round { box-sizing: border-box; width: 15px; height: 15px; border: 1px solid #566d97; border-radius: 50%; background: radial-gradient(#fff, #c5d3e8); }
  input[type="range"] { appearance: none; width: 102px; height: 16px; margin: 0; background: linear-gradient(#e5eefb, #e5eefb) center / 100% 1px no-repeat; }
  input[type="range"]::-webkit-slider-thumb { appearance: none; width: 9px; height: 13px; border: 1px solid #566d97; border-radius: 1px 1px 5px 5px; background: linear-gradient(90deg, #fff, #b9c9e3); }
  .grip { align-self: flex-end; margin: 0 1px 1px 6px; }
</style>
